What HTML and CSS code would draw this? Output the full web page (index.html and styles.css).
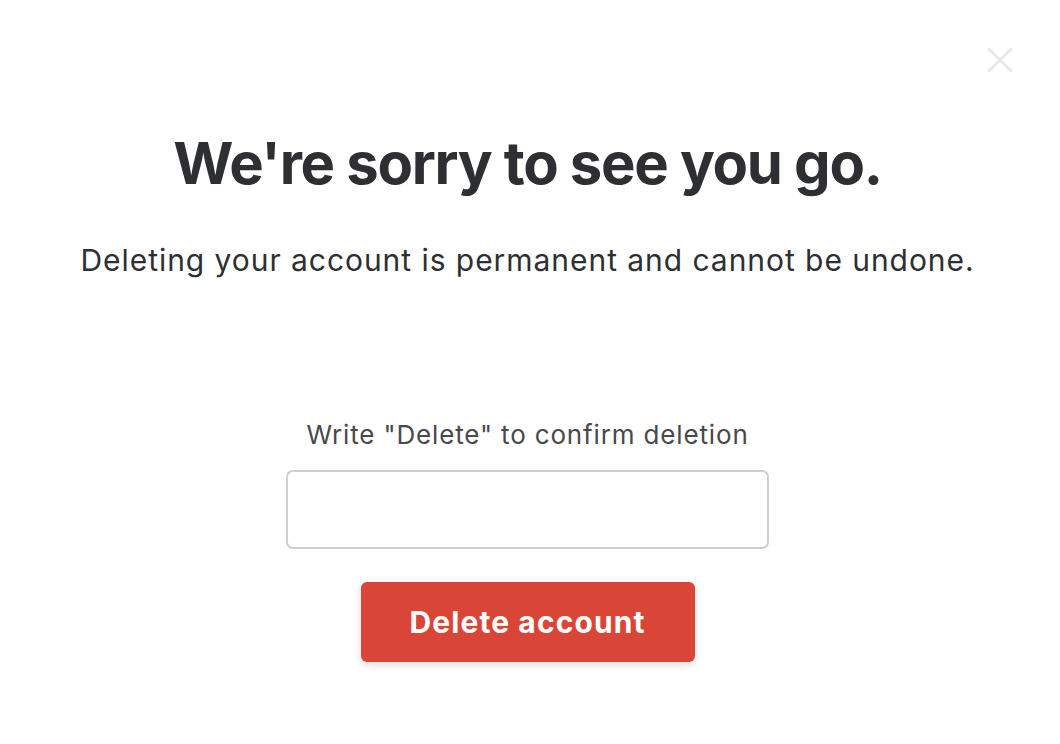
FILE: index.html
```html
<!DOCTYPE html>
<html lang="en">
<head>
<meta charset="utf-8">
<title>Delete account</title>
<link rel="stylesheet" href="styles.css">
</head>
<body>
<div class="modal">
  <button class="close" aria-label="Close">
    <svg width="28" height="28" viewBox="0 0 28 28"><path d="M3 3L25 25M25 3L3 25" stroke="#e8e8ec" stroke-width="3" stroke-linecap="round"/></svg>
  </button>
  <h1 class="title">We're sorry to see you go.</h1>
  <p class="subtitle">Deleting your account is permanent and cannot be undone.</p>
  <form class="confirm">
    <label class="label" for="confirm">Write "Delete" to confirm deletion</label>
    <input class="input" id="confirm" type="text">
    <button class="danger" type="button">Delete account</button>
  </form>
</div>
</body>
</html>
```
FILE: styles.css
```css
html, body {
  margin: 0;
  padding: 0;
  background: #ffffff;
}
body {
  font-family: Inter, "Noto Sans", sans-serif;
  color: #2e2f33;
}
.modal {
  position: relative;
  width: 1060px;
  height: 744px;
  display: flex;
  flex-direction: column;
  align-items: center;
  box-sizing: border-box;
  padding: 128px 5px 0 0;
}
.close {
  position: absolute;
  top: 46px;
  right: 46px;
  padding: 0;
  border: 0;
  background: none;
  width: 28px;
  height: 28px;
}
.title {
  margin: 0;
  font-size: 58px;
  font-weight: 700;
  line-height: 70px;
  letter-spacing: -1.3px;
  color: #2e2f33;
}
.subtitle {
  margin: 42px 0 0;
  font-size: 30px;
  line-height: 40px;
  letter-spacing: 0.95px;
  color: #2e2f33;
}
.confirm {
  margin-top: 138px;
  display: flex;
  flex-direction: column;
  align-items: center;
}
.label {
  font-size: 26px;
  line-height: 34px;
  letter-spacing: 0.85px;
  color: #48494d;
}
.input {
  margin-top: 18px;
  width: 483px;
  height: 79px;
  box-sizing: border-box;
  border: 2px solid #cfcfd1;
  border-radius: 7px;
  font-family: inherit;
  font-size: 26px;
  padding: 0 16px;
  outline: none;
}
.danger {
  margin-top: 33px;
  width: 334px;
  height: 80px;
  border: 0;
  border-radius: 6px;
  background: #d94637;
  color: #ffffff;
  font-family: inherit;
  font-size: 30px;
  font-weight: 700;
  letter-spacing: 1.1px;
  box-shadow: 0 3px 8px rgba(0,0,0,0.14);
}
```
